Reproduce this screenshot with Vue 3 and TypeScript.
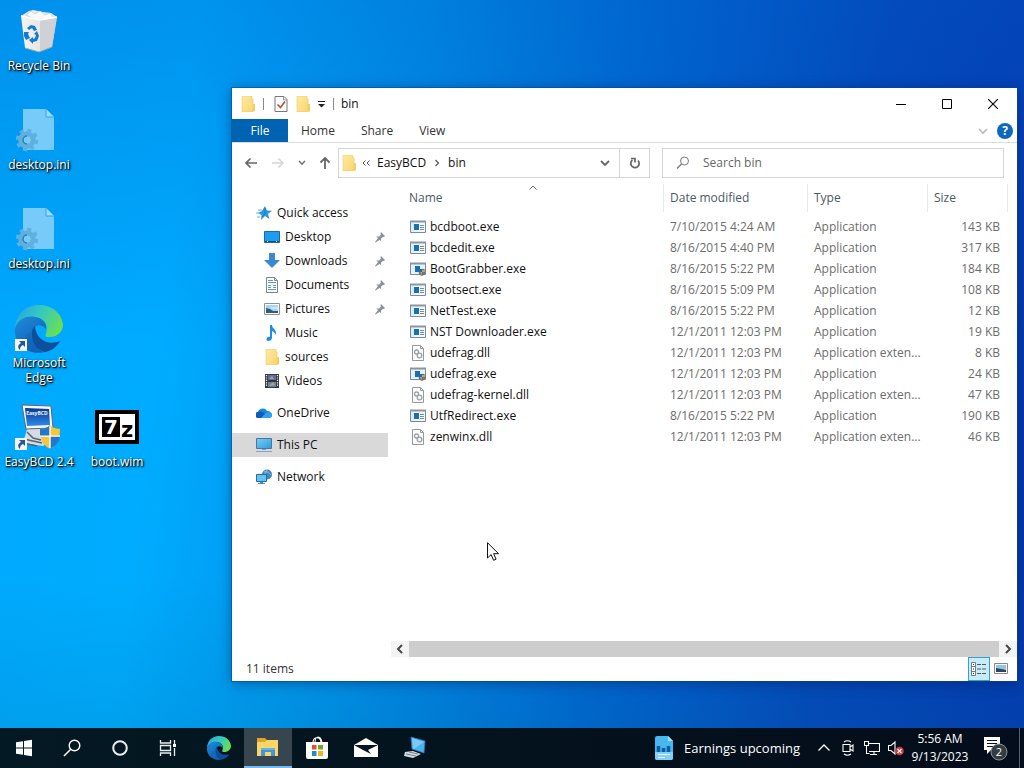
<script setup lang="ts">
import { ref } from 'vue'

interface DesktopItem { label: string; icon: string; col: number; row: number }
interface NavItem { label: string; icon: string; child?: boolean; pinned?: boolean; current?: boolean; gap?: boolean }
interface FileRow { name: string; icon: string; date: string; type: string; size: string }

const query = ref('')

const desktopItems: DesktopItem[] = [
  { label: 'Recycle Bin', icon: 'bin', col: 1, row: 1 },
  { label: 'desktop.ini', icon: 'ini', col: 1, row: 2 },
  { label: 'desktop.ini', icon: 'ini', col: 1, row: 3 },
  { label: 'Microsoft Edge', icon: 'edge-link', col: 1, row: 4 },
  { label: 'EasyBCD 2.4', icon: 'easybcd', col: 1, row: 5 },
  { label: 'boot.wim', icon: 'sevenzip', col: 2, row: 5 },
]

const navItems: NavItem[] = [
  { label: 'Quick access', icon: 'star' },
  { label: 'Desktop', icon: 'desktop', child: true, pinned: true },
  { label: 'Downloads', icon: 'download', child: true, pinned: true },
  { label: 'Documents', icon: 'document', child: true, pinned: true },
  { label: 'Pictures', icon: 'picture', child: true, pinned: true },
  { label: 'Music', icon: 'music', child: true },
  { label: 'sources', icon: 'folder', child: true },
  { label: 'Videos', icon: 'video', child: true },
  { label: 'OneDrive', icon: 'cloud', gap: true },
  { label: 'This PC', icon: 'pc', gap: true, current: true },
  { label: 'Network', icon: 'network', gap: true },
]

const files: FileRow[] = [
  { name: 'bcdboot.exe', icon: 'exe', date: '7/10/2015 4:24 AM', type: 'Application', size: '143 KB' },
  { name: 'bcdedit.exe', icon: 'exe', date: '8/16/2015 4:40 PM', type: 'Application', size: '317 KB' },
  { name: 'BootGrabber.exe', icon: 'exe-shield', date: '8/16/2015 5:22 PM', type: 'Application', size: '184 KB' },
  { name: 'bootsect.exe', icon: 'exe', date: '8/16/2015 5:09 PM', type: 'Application', size: '108 KB' },
  { name: 'NetTest.exe', icon: 'exe', date: '8/16/2015 5:22 PM', type: 'Application', size: '12 KB' },
  { name: 'NST Downloader.exe', icon: 'exe', date: '12/1/2011 12:03 PM', type: 'Application', size: '19 KB' },
  { name: 'udefrag.dll', icon: 'dll', date: '12/1/2011 12:03 PM', type: 'Application exten...', size: '8 KB' },
  { name: 'udefrag.exe', icon: 'exe-shield', date: '12/1/2011 12:03 PM', type: 'Application', size: '24 KB' },
  { name: 'udefrag-kernel.dll', icon: 'dll', date: '12/1/2011 12:03 PM', type: 'Application exten...', size: '47 KB' },
  { name: 'UtfRedirect.exe', icon: 'exe', date: '8/16/2015 5:22 PM', type: 'Application', size: '190 KB' },
  { name: 'zenwinx.dll', icon: 'dll', date: '12/1/2011 12:03 PM', type: 'Application exten...', size: '46 KB' },
]

const systemButtons = [
  { label: 'Start', icon: 'start' },
  { label: 'Search', icon: 'search-task' },
  { label: 'Cortana', icon: 'cortana' },
  { label: 'Task View', icon: 'taskview' },
]

const appButtons = [
  { label: 'Microsoft Edge', icon: 'edge', active: false },
  { label: 'File Explorer', icon: 'explorer', active: true },
  { label: 'Microsoft Store', icon: 'store', active: false },
  { label: 'Mail', icon: 'mail', active: false },
  { label: 'Remote Desktop', icon: 'remote', active: false },
]
</script>

<template>
  <div class="screen">
    <svg class="sprite" aria-hidden="true">
      <defs>
        <linearGradient id="g-bin" x1="0" x2="1"><stop offset="0" stop-color="#f4f4f4" /><stop offset=".65" stop-color="#e3e3e3" /><stop offset="1" stop-color="#b9bcc0" /></linearGradient>
        <linearGradient id="g-edge-top" x1="0" y1=".3" x2="1" y2=".7"><stop offset="0" stop-color="#2aa9e0" /><stop offset=".45" stop-color="#35c9c0" /><stop offset="1" stop-color="#6fe04a" /></linearGradient>
        <linearGradient id="g-edge-left" x1="0" y1="0" x2=".6" y2="1"><stop offset="0" stop-color="#1f8ddb" /><stop offset="1" stop-color="#0f5cb4" /></linearGradient>
        <linearGradient id="g-folder" x1="0" x2="1" y2="1"><stop offset="0" stop-color="#ffe9a2" /><stop offset="1" stop-color="#f9d66f" /></linearGradient>
        <linearGradient id="g-screen" x2="1" y2="1"><stop offset="0" stop-color="#7ccdf5" /><stop offset="1" stop-color="#2b9be0" /></linearGradient>
        <linearGradient id="g-crt" x2="0" y2="1"><stop offset="0" stop-color="#0b3690" /><stop offset="1" stop-color="#2f8ae8" /></linearGradient>
      </defs>

      <symbol id="bin" viewBox="0 0 48 48">
        <path d="M6 8 14 3l4-1 5 1 5 1 8 1 6 4-3 5H9z" fill="#e9eaeb" />
        <path d="M11 7l5-4 4 3 5-3 5 4 5-2 3 4-12 5z" fill="#fafafa" stroke="#c4c8cc" stroke-width=".7" />
        <path d="M6 8l19 4 17-3-5 30-13 5L10 40z" fill="url(#g-bin)" />
        <path d="M25 12l17-3-5 30-12 4z" fill="#cfd1d4" />
        <path d="M6 8l19 4 17-3" fill="none" stroke="#fff" stroke-width="1.4" />
        <path d="M10 40l14 4 13-5" fill="none" stroke="#9aa" stroke-width="1" />
        <path d="M12 20l4-3 4 1 2 4-3 1-2-3-3 2zM9 24l5 0-1 2 2 4-4 2-2-4zM22 23l2 5-2 5-4 1v2l-4-4 4-3v2l2-1 1-3-2-1z" fill="#1779cc" />
      </symbol>

      <symbol id="ini" viewBox="0 0 48 48">
        <path d="M8 2h23l8 8v33H8z" fill="#77cbf8" />
        <path d="M31 2v8h8" fill="#9bdcff" stroke="#3aa0d8" stroke-width="1" />
        <circle cx="12" cy="33" r="9.500" fill="none" stroke="#5fb0de" stroke-width="3.500" stroke-dasharray="3.900 3.560" />
        <circle cx="12" cy="33" r="6.200" fill="none" stroke="#5fb0de" stroke-width="5" />
        <path d="M12 29a4 4 0 0 0 0 8" fill="none" stroke="#2c7fb5" stroke-width="1.500" />
      </symbol>

      <symbol id="edge" viewBox="0 0 48 48">
        <path d="M24 0C10 0 1 10 0 23c4-8 12-12 20-11 9 1 14 8 11 16-1 2-1 4 2 4 8 1 15-5 15-12C47 8 37 0 24 0z" fill="url(#g-edge-top)" />
        <path d="M0 24C2 15 11 10 20 12c8 1 12 7 11 12-3-4-8-5-11-2-5 7 0 24 9 25-16 3-30-7-29-23z" fill="url(#g-edge-left)" />
        <path d="M20 21c-7 6-2 24 10 26 6-1 12-5 15-11-7 3-15 2-20-3-3-3-5-8-5-12z" fill="#0c4f9b" />
        <path d="M15 27c0 12 7 18 15 20-10 3-21-1-25-10" fill="#1466b8" opacity=".6" />
      </symbol>

      <symbol id="shortcut" viewBox="0 0 12 12">
        <path d="M0 0h12v12H0z" fill="#f4f6fb" />
        <path d="M4 2h6v6L8 6c-2 1-3 2-3 5-3-3-2-5 1-7z" fill="#27549c" />
      </symbol>

      <symbol id="edge-link" viewBox="0 0 48 48">
        <use href="#edge" width="48" height="48" />
        <use href="#shortcut" y="34" width="12" height="12" />
      </symbol>

      <symbol id="shield" viewBox="0 0 22 26">
        <path d="M11 0c3 3 7 4 11 4 0 10-2 18-11 22C2 22 0 14 0 4c4 0 8-1 11-4z" fill="#f6c739" />
        <path d="M11 0v12H0V4c4 0 8-1 11-4zM11 12h11c-1 6-4 11-11 14z" fill="#2477c9" />
        <path d="M11 1v24M0 12h22" stroke="#fff" stroke-width="1.500" />
      </symbol>

      <symbol id="easybcd" viewBox="0 0 48 48">
        <path d="M12 25h18l8 10-10 7-20-3z" fill="#d5dce5" />
        <path d="M12 28l6 6 8 2M9 35l18 4M8 39l14 3" stroke="#59636f" stroke-width="1.500" fill="none" />
        <path d="M7 1l29 1 2 22-27 1z" fill="#f4f7fa" stroke="#5c6675" />
        <path d="M10 4l24 1 1 16-23 1z" fill="url(#g-crt)" />
        <text x="22" y="11" text-anchor="middle" font-size="5" font-weight="700" font-family="Open Sans, sans-serif" fill="#f3f7ff">EasyBCD</text>
        <use href="#shield" x="25" y="21" width="20" height="24" />
        <use href="#shortcut" y="34" width="12" height="12" />
      </symbol>

      <symbol id="sevenzip" viewBox="0 0 48 48">
        <path d="M2 6h44v34H2z" fill="#000" />
        <path d="M6 10h36v26H6z" fill="#fff" />
        <path d="M9 13h18v20H9z" fill="#000" />
        <text x="18" y="30" text-anchor="middle" font-size="20" font-weight="700" font-family="DejaVu Sans, sans-serif" fill="#fff">7</text>
        <text x="34" y="33" text-anchor="middle" font-size="21" font-weight="700" font-family="DejaVu Sans, sans-serif" fill="#000">z</text>
      </symbol>

      <symbol id="folder" viewBox="0 0 16 16">
        <path d="M2 0h10v3h1v13H2z" fill="url(#g-folder)" stroke="#ecc968" stroke-width=".6" />
        <path d="M13 8h2v7l-2 1z" fill="#f3cd62" />
      </symbol>

      <symbol id="check" viewBox="0 0 16 16">
        <path d="M2 .5h9l3 3v12H2z" fill="#fff" stroke="#777" />
        <path d="M10.500.5v3.500H14" fill="none" stroke="#999" />
        <path d="M4.500 8.500l3 3 4.500-6" fill="none" stroke="#b5533c" stroke-width="1.700" />
      </symbol>

      <symbol id="star" viewBox="0 0 16 16">
        <path d="M9 1l2 4.500 5 .2-4 3.300 1.500 5L9 11l-4 4 .5-5L2 8l4-2z" fill="#2f96e0" />
        <path d="M2 5h4M0 8h4M1 12h3" stroke="#5cb5ee" stroke-width="1" />
        <path d="M9 3v6l-3 3" stroke="#1673bd" fill="none" stroke-width=".8" />
      </symbol>
      <symbol id="desktop" viewBox="0 0 16 16">
        <path d="M.5 2.500h15v11H.5z" fill="#1e9df0" stroke="#176b9f" />
        <path d="M1 12.500h14" stroke="#0c5278" />
        <path d="M3 12.500h1m8 0h1" stroke="#fff" />
      </symbol>
      <symbol id="download" viewBox="0 0 16 16"><path d="M5 0h6v7h5l-8 8-8-8h5z" fill="#3b87d2" /></symbol>
      <symbol id="document" viewBox="0 0 16 16">
        <path d="M2.500.5h8l3 3v12h-11z" fill="#fff" stroke="#7c8790" />
        <path d="M10.500.5v3h3" fill="none" stroke="#7c8790" />
        <path d="M4 3.500h5M4 5.500h8M4 8.500h3m2 0h3M4 10.500h3m2 0h3M4 12.500h8" stroke="#58a0c0" />
      </symbol>
      <symbol id="picture" viewBox="0 0 16 16">
        <path d="M.5 2.500h15v11H.5z" fill="#fff" stroke="#8b9299" />
        <path d="M2 4h12v8H2z" fill="#a9d6f3" />
        <path d="M2 7l4 1 3 2h5v2H2z" fill="#2d5d80" />
        <path d="M7 7h7" stroke="#eff8fd" />
      </symbol>
      <symbol id="music" viewBox="0 0 16 16">
        <path d="M6 0h2c0 4 5 4 4 10-1-2-2-3-4-4v7c0 2-2 3-4 3s-2-3 0-4c1-.5 2 0 2 0z" fill="#1f8de0" />
      </symbol>
      <symbol id="video" viewBox="0 0 16 16">
        <path d="M1 1h14v14H1z" fill="#35383d" />
        <path d="M2.500 2v12M13.500 2v12" stroke="#fff" stroke-width="1.200" stroke-dasharray="1.200 1.200" />
        <path d="M4 2h8v5H4z" fill="#5a6cb4" /><path d="M4 9h8v5H4z" fill="#5c83bb" />
        <path d="M5 6l3-3 2 3zM5 13l4-4 2 3z" fill="#c4a34b" />
      </symbol>
      <symbol id="cloud" viewBox="0 0 16 16">
        <path d="M3 13a3 3 0 0 1-1-6c1-4 7-5 9-1 3 0 5 2 5 4s-1 3-3 3z" fill="#1586dc" />
        <path d="M3 13a3 3 0 0 1-1-6c2-1 5 0 7 2l5 4z" fill="#0a60b6" />
        <path d="M9 9c2-2 4-2 6-1 2 3 0 5-2 5H5z" fill="#30a3ef" />
      </symbol>
      <symbol id="pc" viewBox="0 0 16 16">
        <path d="M.5 1.500h15v10H.5z" fill="url(#g-screen)" stroke="#47799b" />
        <path d="M6 12h4v1H6zM0 14h16v1H0z" fill="#7aa4bf" />
      </symbol>
      <symbol id="network" viewBox="0 0 16 16">
        <circle cx="11" cy="5.500" r="5" fill="#4186b8" />
        <path d="M8 3c3-1 5 1 7 3M11 1c-1 2-2 3-2 5" stroke="#a5cfe8" fill="none" stroke-width=".8" />
        <path d="M.5 5.500h10v7H.5z" fill="#66c2f0" stroke="#1e6fa8" />
        <path d="M4 13h3v1H4zM2 14h7v1H2z" fill="#4d8db3" />
      </symbol>
      <symbol id="pin" viewBox="0 0 12 12">
        <path d="M7 1l4 4-1 1-1-.3-2 2V10L5.500 9 1.500 11.500 1 11l3-4L2 5.500h3l2-2L6.500 2z" fill="#8b949c" />
      </symbol>

      <symbol id="exe" viewBox="0 0 16 14">
        <path d="M.5 1.500h15v11H.5z" fill="#f3f8fb" stroke="#7d8a93" />
        <path d="M0 1.500h16" stroke="#8b959d" stroke-width="2" />
        <path d="M1 3h3v9H1z" fill="#d6effa" />
        <path d="M4 4h5v6H4z" fill="#1a6fb3" />
        <path d="M10 5.500h4m-4 2h4m-4 2h4" stroke="#6c8fab" />
      </symbol>
      <symbol id="exe-shield" viewBox="0 0 16 14">
        <path d="M.5 1.500h15v11H.5z" fill="#e3f3fb" stroke="#7d8a93" />
        <path d="M0 1.500h16" stroke="#8b959d" stroke-width="2" />
        <path d="M5 4h5v3h4v3H5z" fill="#1a6fb3" />
        <path d="M9 7c2 1 5 1 7 0 0 4-1 6-4 7-3-1-4-3-3-7z" fill="#6a7680" />
        <path d="M9 7h3v3H9z" fill="#1f6db0" /><path d="M12 8h3v2h-3zM10 10h2v3z" fill="#d0a640" />
      </symbol>
      <symbol id="dll" viewBox="0 0 16 16">
        <path d="M2.500.5h8l3 3v12h-11z" fill="#fcfcfc" stroke="#959a9e" />
        <path d="M10.500.5v3h3" fill="none" stroke="#959a9e" />
        <circle cx="6.500" cy="7" r="2" fill="none" stroke="#9aa1a6" stroke-width="1.300" />
        <circle cx="9.500" cy="10.500" r="2.300" fill="none" stroke="#9aa1a6" stroke-width="1.300" />
      </symbol>

      <symbol id="start" viewBox="0 0 24 24"><path d="M4 6.200l7-1v6.300H4zM12 5l8-1.200v7.700h-8zM4 12.500h7v6.300l-7-1zM12 12.500h8v7.700L12 19z" fill="#fff" /></symbol>
      <symbol id="search-task" viewBox="0 0 24 24"><circle cx="14.500" cy="9.500" r="5.300" fill="none" stroke="#fff" stroke-width="1.400" /><path d="M10.700 13.300L4 20" stroke="#fff" stroke-width="1.500" /></symbol>
      <symbol id="cortana" viewBox="0 0 24 24"><circle cx="12" cy="12" r="6.800" fill="none" stroke="#e9edf0" stroke-width="2" /></symbol>
      <symbol id="taskview" viewBox="0 0 24 24">
        <path d="M4.500 4v3h10V4M4.500 20v-3h10v3M4.500 9.500h10v5h-10zM18.500 4v5m0 3v8" fill="none" stroke="#e9edf0" stroke-width="1.300" />
        <path d="M17 8h3v3h-3z" fill="#fff" />
      </symbol>
      <symbol id="explorer" viewBox="0 0 24 24">
        <path d="M1 3h8l2 2h11v16H1z" fill="#e1a32a" /><path d="M1 7h8l2-2h11v16H1z" fill="#fcd567" />
        <path d="M5 21v-8h14v8h-4v-4H9v4z" fill="#4295d5" /><path d="M5 13h14v2H5z" fill="#5fb4ec" />
      </symbol>
      <symbol id="store" viewBox="0 0 24 24">
        <path d="M8 7c0-7 8-7 8 0M10 7c0-8 6-8 7 0" fill="none" stroke="#fff" stroke-width="1.100" />
        <path d="M1 6h22v15q0 2-2 2H3q-2 0-2-2z" fill="#fff" />
        <path d="M7 9h4.500v4.500H7z" fill="#e44f2d" /><path d="M13 9h5v4.500h-5z" fill="#70a82b" /><path d="M7 15h4.500v5H7z" fill="#1f8dd0" /><path d="M13 15h5v5h-5z" fill="#eeb71c" />
      </symbol>
      <symbol id="mail" viewBox="0 0 24 24">
        <path d="M0 9l12-7 12 7v12H0z" fill="#fff" /><path d="M0 9l24 0-10 5 3 4-8-4z" fill="#041622" />
      </symbol>
      <symbol id="remote" viewBox="0 0 24 24">
        <path d="M8 1l14 4-1 12-12-4z" fill="#4bb2ef" stroke="#267eb9" stroke-width=".7" /><path d="M9 2l12 4-10 7-1-1z" fill="#7bcaf5" />
        <path d="M2 16l8-1 8 3-8 4-9-2z" fill="#d3dbe1" /><path d="M3 18l10 2M6 16l9 2" stroke="#77848e" />
      </symbol>

      <symbol id="news" viewBox="0 0 18 24">
        <path d="M2 0h11l5 5v17q0 2-2 2H2q-2 0-2-2V2q0-2 2-2z" fill="#49b6ef" /><path d="M13 0v5h5" fill="#a7e0fb" />
        <path d="M0 16h18v6q0 2-2 2H2q-2 0-2-2z" fill="#80d0f7" />
        <path d="M3.500 16v-6m5 6v-4m5 4v-6" stroke="#0f5d9e" stroke-width="3.500" /><path d="M3 18.500h12M3 21.500h7" stroke="#e7f8ff" />
      </symbol>
      <symbol id="chev-up" viewBox="0 0 16 16"><path d="M2.500 10.500L8 5l5.500 5.500" fill="none" stroke="#fff" stroke-width="1.300" /></symbol>
      <symbol id="meet" viewBox="0 0 16 16"><path d="M3 4.500h7v7H3zM10 7l3-2v6l-3-2M4 2q3.500-2.500 7 0M4 14q3.500 2.500 7 0" fill="none" stroke="#fff" stroke-width="1.100" /></symbol>
      <symbol id="ethernet" viewBox="0 0 16 16"><path d="M5 3.500h10.500v8H5M.5 1.500h4v4h-4zM2.500 5.500v8h3M10 12v2.500M6 14.500h7" fill="none" stroke="#fff" stroke-width="1.100" /></symbol>
      <symbol id="muted" viewBox="0 0 16 16">
        <path d="M.5 5.500H3L7 2v12L3 10.500H.5z" fill="none" stroke="#fff" stroke-width="1.100" /><circle cx="11.500" cy="11" r="4.300" fill="#d4363c" /><path d="M9.500 9l4 4m0-4l-4 4" stroke="#fff" stroke-width="1.200" />
      </symbol>
      <symbol id="notice" viewBox="0 0 26 26">
        <path d="M1 2h16v13H8l-4 4v-4H1z" fill="#fff" /><path d="M4 5.500h10M4 8.500h10M4 11.500h7" stroke="#07131c" stroke-width="1.100" />
        <circle cx="16" cy="17" r="8" fill="#333b43" stroke="#8a9299" />
        <text x="16" y="21" text-anchor="middle" font-size="11" font-family="Open Sans, sans-serif" fill="#fff">2</text>
      </symbol>
    </svg>

    <main class="desktop">
      <div class="desktop-icons">
        <button v-for="item in desktopItems" :key="item.label + item.row" class="desktop-item" :class="[`col-${item.col}`, `row-${item.row}`]">
          <svg class="i48"><use :href="`#${item.icon}`" /></svg>
          <span>{{ item.label }}</span>
        </button>
      </div>

      <section class="window" aria-label="bin">
        <header class="titlebar">
          <svg class="i16"><use href="#folder" /></svg>
          <span class="divider first"></span>
          <button class="plain" aria-label="Properties"><svg class="i16"><use href="#check" /></svg></button>
          <button class="plain quick" aria-label="New folder"><svg class="i16"><use href="#folder" /></svg></button>
          <button class="plain customize" aria-label="Customize Quick Access Toolbar"><svg width="8" height="8" viewBox="0 0 8 8"><path d="M1 1.500h7" stroke="#222" /><path d="M1 4h7L4.500 7.500z" fill="#222" /></svg></button>
          <span class="divider"></span>
          <h1>bin</h1>
          <div class="controls">
            <button aria-label="Minimize"><svg width="10" height="10" viewBox="0 0 10 10"><path d="M0 5.500h10" stroke="#000" /></svg></button>
            <button aria-label="Maximize"><svg width="10" height="10" viewBox="0 0 10 10"><path d="M.5.500h9v9h-9z" fill="none" stroke="#000" /></svg></button>
            <button aria-label="Close"><svg width="10" height="10" viewBox="0 0 10 10"><path d="M0 0l10 10M10 0L0 10" stroke="#000" stroke-width="1.100" /></svg></button>
          </div>
        </header>

        <nav class="ribbon" aria-label="Ribbon">
          <button class="tab file">File</button>
          <button class="tab">Home</button>
          <button class="tab">Share</button>
          <button class="tab">View</button>
          <div class="ribbon-end">
            <button class="plain" aria-label="Expand the Ribbon"><svg width="10" height="8" viewBox="0 0 10 8"><path d="M1 2l4 4 4-4" fill="none" stroke="#b8b8b8" stroke-width="1.600" /></svg></button>
            <button class="help" aria-label="Help">?</button>
          </div>
        </nav>

        <div class="address-row">
          <div class="arrows">
            <button class="plain" aria-label="Back"><svg width="14" height="12" viewBox="0 0 14 12"><path d="M13 6H2M6.500 1.500L2 6l4.500 4.500" fill="none" stroke="#666" stroke-width="1.700" /></svg></button>
            <button class="plain" aria-label="Forward"><svg width="14" height="12" viewBox="0 0 14 12"><path d="M1 6h11M7.500 1.500L12 6l-4.500 4.500" fill="none" stroke="#d5d5d5" stroke-width="1.500" /></svg></button>
            <button class="plain" aria-label="Recent locations"><svg width="8" height="8" viewBox="0 0 8 8"><path d="M1 2l3 3 3-3" fill="none" stroke="#777" stroke-width="1.600" /></svg></button>
            <button class="plain" aria-label="Up"><svg width="12" height="14" viewBox="0 0 12 14"><path d="M6 13V2M1.500 6.500L6 2l4.500 4.500" fill="none" stroke="#666" stroke-width="1.800" /></svg></button>
          </div>
          <div class="address">
            <svg class="i16"><use href="#folder" /></svg>
            <svg class="back-mark" width="8" height="6" viewBox="0 0 8 6"><path d="M3.500.5L1 3l2.500 2.500M7.500.5L5 3l2.500 2.500" fill="none" stroke="#555" /></svg>
            <button class="plain">EasyBCD</button>
            <svg class="sep" width="6" height="8" viewBox="0 0 6 8"><path d="M1.500 1l3 3-3 3" fill="none" stroke="#555" stroke-width="1.200" /></svg>
            <button class="plain">bin</button>
            <button class="plain history" aria-label="Previous locations"><svg width="10" height="8" viewBox="0 0 10 8"><path d="M1 2l4 4 4-4" fill="none" stroke="#666" stroke-width="1.800" /></svg></button>
            <button class="refresh" aria-label="Refresh"><svg width="12" height="14" viewBox="0 0 12 14"><path d="M3.500 4A4.200 4.200 0 1 0 9 4.500M2 2.500h4v4" fill="none" stroke="#666" stroke-width="1.700" /></svg></button>
          </div>
          <label class="search">
            <svg width="14" height="14" viewBox="0 0 14 14"><circle cx="8.500" cy="5" r="4" fill="none" stroke="#777" /><path d="M5.500 8L1 12.500" stroke="#777" stroke-width="1.200" /></svg>
            <input v-model="query" type="text" placeholder="Search bin" aria-label="Search bin" />
          </label>
        </div>

        <div class="body">
          <nav class="sidebar" aria-label="Folders">
            <a v-for="item in navItems" :key="item.label" href="#" :class="{ child: item.child, current: item.current, gap: item.gap }">
              <svg class="i16"><use :href="`#${item.icon}`" /></svg>
              <span>{{ item.label }}</span>
              <svg v-if="item.pinned" class="pin"><use href="#pin" /></svg>
            </a>
          </nav>
          <div class="pane">
            <table>
              <colgroup><col /><col class="c-date" /><col class="c-type" /><col class="c-size" /></colgroup>
              <thead>
                <tr>
                  <th class="name">Name<svg class="sort" width="8" height="5" viewBox="0 0 8 5"><path d="M.5 4.500L4 1l3.500 3.500" fill="none" stroke="#666" /></svg></th>
                  <th>Date modified</th><th>Type</th><th>Size</th>
                </tr>
              </thead>
              <tbody>
                <tr v-for="file in files" :key="file.name">
                  <td class="name"><span class="file-name"><svg class="i16"><use :href="`#${file.icon}`" /></svg>{{ file.name }}</span></td>
                  <td>{{ file.date }}</td><td>{{ file.type }}</td><td class="size">{{ file.size }}</td>
                </tr>
              </tbody>
            </table>
            <div class="scrollbar">
              <button aria-label="Scroll left"><svg width="8" height="10" viewBox="0 0 8 10"><path d="M6 1L2 5l4 4" fill="none" stroke="#444" stroke-width="1.900" /></svg></button>
              <div class="thumb"></div>
              <button aria-label="Scroll right"><svg width="8" height="10" viewBox="0 0 8 10"><path d="M2 1l4 4-4 4" fill="none" stroke="#444" stroke-width="1.900" /></svg></button>
            </div>
          </div>
        </div>

        <footer class="status">
          <span>11 items</span>
          <div class="views">
            <button class="on" aria-label="Details view"><svg width="18" height="16" viewBox="0 0 18 16"><path d="M1.500 1.500h4v13h-4zM1.500 5.500h4m-4 5h4" fill="#fff" stroke="#6e7d85" /><path d="M7 3.500h4m1 0h4M7 8h4m1 0h4M7 12.500h4m1 0h4" stroke="#4b5b64" /><path d="M3 3.500h1M3 8h1m-1 4.500h1" stroke="#333" /></svg></button>
            <button aria-label="Large icons view"><svg width="14" height="12" viewBox="0 0 14 12"><path d="M.5.500h13v10H.5z" fill="#fff" stroke="#888" /><path d="M2 2h10v7H2z" fill="#8fc5e8" /><path d="M2 5l5 1 5 1v2H2z" fill="#25475d" /></svg></button>
          </div>
        </footer>
      </section>

      <svg class="cursor" width="12" height="19" viewBox="0 0 12 19" aria-hidden="true"><path d="M.5.700v15.300l3.600-3.400 2.500 5.700 2.500-1.100-2.500-5.500h5z" fill="#fff" stroke="#111" /></svg>
    </main>

    <footer class="taskbar">
      <button v-for="item in systemButtons" :key="item.label" class="task" :aria-label="item.label"><svg class="i24"><use :href="`#${item.icon}`" /></svg></button>
      <div class="apps">
        <button v-for="item in appButtons" :key="item.label" class="task" :class="{ active: item.active }" :aria-label="item.label"><svg class="i24"><use :href="`#${item.icon}`" /></svg></button>
      </div>
      <button class="news"><svg width="18" height="24"><use href="#news" /></svg>Earnings upcoming</button>
      <div class="tray">
        <button aria-label="Show hidden icons"><svg class="i16"><use href="#chev-up" /></svg></button>
        <button aria-label="Meet Now"><svg class="i16"><use href="#meet" /></svg></button>
        <button aria-label="Network"><svg class="i16"><use href="#ethernet" /></svg></button>
        <button aria-label="Volume muted"><svg class="i16"><use href="#muted" /></svg></button>
      </div>
      <button class="clock"><time>5:56 AM</time><time>9/13/2023</time></button>
      <button class="notice" aria-label="2 new notifications"><svg width="26" height="26"><use href="#notice" /></svg></button>
      <button class="show-desktop" aria-label="Show desktop"></button>
    </footer>
  </div>
</template>

<style scoped>
* { box-sizing: border-box; }
.screen {
  min-height: 100vh;
  display: flex;
  flex-direction: column;
  overflow: hidden;
  font: 12px/16px "Open Sans", "Noto Sans", sans-serif;
  color: #111;
  background:
    linear-gradient(to bottom, rgba(0, 90, 200, .3) 0%, rgba(0, 110, 220, 0) 45%, rgba(0, 110, 190, 0) 75%, rgba(0, 110, 160, .22) 100%),
    linear-gradient(97deg, #00a8fc 0%, #00acff 18%, #0090e8 38%, #0065cf 60%, #0445b8 80%, #0436ae 100%);
}
button { font: inherit; color: inherit; background: none; border: 0; padding: 0; margin: 0; display: flex; align-items: center; justify-content: center; }
svg { flex: none; display: block; text-shadow: none; }
.sprite { position: absolute; width: 0; height: 0; }
.i16 { width: 16px; height: 16px; }
.i24 { width: 24px; height: 24px; }
.i48 { width: 48px; height: 48px; }

.desktop { position: relative; flex: 1; display: flex; }
.desktop-icons { display: grid; grid-template-columns: repeat(2, 78px); grid-auto-rows: 99px; align-content: start; }
.desktop-item { flex-direction: column; justify-content: flex-start; padding-top: 8px; gap: 2px; color: #fff; line-height: 15px; text-shadow: 1px 1px 1px #000, 1px 1px 3px #000; }
.desktop-item span { max-width: 76px; }
.col-1 { grid-column: 1; }
.col-2 { grid-column: 2; }
.row-1 { grid-row: 1; }
.row-2 { grid-row: 2; }
.row-3 { grid-row: 3; }
.row-4 { grid-row: 4; }
.row-5 { grid-row: 5; }

.window { position: absolute; inset: 88px 7px 47px 232px; display: flex; flex-direction: column; background: #fff; box-shadow: 0 0 0 1px rgba(10, 75, 130, .55), 0 2px 12px rgba(0, 20, 80, .45); }
.titlebar { display: flex; align-items: center; height: 31px; padding-left: 8px; }
.divider { width: 1px; height: 12px; background: #888; margin-right: 7px; }
.divider.first { margin: 0 9px 0 7px; }
.quick { margin-left: 6px; }
.customize { margin: 0 8px 0 6px; }
h1 { margin: 0; font-size: 12px; font-weight: 400; }
.controls { display: flex; align-self: stretch; margin-left: auto; padding-right: 1px; }
.controls button { width: 46px; }

.ribbon { display: flex; height: 24px; border-bottom: 1px solid #dcdcdc; color: #333; }
.tab { padding: 0 13px; }
.tab.file { width: 56px; background: #0063b1; color: #fff; }
.ribbon-end { display: flex; align-items: center; gap: 9px; margin-left: auto; padding-right: 4px; }
.help { width: 16px; height: 16px; border-radius: 50%; background: #0b68bd; color: #fff; font-weight: 700; }

.address-row { display: grid; grid-template-columns: 94px 312fr 354fr; align-items: center; height: 41px; padding: 0 13px 2px 12px; }
.arrows { display: flex; align-items: center; justify-content: space-between; padding-right: 7px; }
.address { display: flex; align-items: center; min-width: 0; height: 30px; border: 1px solid #d5d5d5; padding-left: 2px; }
.back-mark { margin: 0 7px 0 5px; }
.sep { margin: 0 8px; }
.history { margin-left: auto; margin-right: 9px; }
.refresh { width: 30px; height: 28px; border-left: 1px solid #d5d5d5; }
.search { display: flex; align-items: center; min-width: 0; height: 30px; margin-left: 12px; border: 1px solid #d5d5d5; padding-left: 13px; gap: 13px; }
.search input { flex: 1; min-width: 0; border: 0; padding: 0; outline: 0; font: inherit; color: #333; background: none; }
.search input::placeholder { color: #666; opacity: 1; }

.body { display: flex; flex: 1; min-height: 0; }
.sidebar { width: 158px; padding: 17px 2px 0 0; }
.sidebar a { display: flex; align-items: center; gap: 5px; height: 24px; padding-left: 24px; color: #111; text-decoration: none; }
.sidebar a.child { padding-left: 32px; }
.sidebar a.gap { margin-top: 8px; }
.sidebar a.current { background: #d9d9d9; }
.pin { width: 12px; height: 12px; margin-left: auto; margin-right: 2px; }
.pane { flex: 1; min-width: 0; display: flex; flex-direction: column; justify-content: space-between; }
table { width: calc(100% - 9px); border-collapse: separate; border-spacing: 0; table-layout: fixed; }
.c-date { width: 144px; }
.c-type { width: 120px; }
.c-size { width: 80px; }
th { position: relative; height: 28px; padding: 0 6px; text-align: left; font-weight: 400; color: #4c5867; border-right: 1px solid #e8e8e8; }
thead::after { content: ""; display: block; height: 4px; }
.sort { position: absolute; top: 1px; left: 51%; }
td { height: 21px; padding: 0 6px; color: #6d6d6d; white-space: nowrap; line-height: 20px; }
th.name { padding-left: 19px; }
td.name { padding-left: 20px; color: #111; }
td.size { text-align: right; padding-right: 8px; }
.file-name { display: flex; align-items: center; gap: 4px; }
.scrollbar { display: flex; height: 16px; margin-left: 1px; background: #f3f3f3; }
.scrollbar button { width: 18px; }
.thumb { flex: 1; background: #cdcdcd; }
.status { display: flex; align-items: center; justify-content: space-between; height: 24px; padding-left: 14px; color: #333; }
.views { display: flex; margin-right: 5px; }
.views button { width: 22px; height: 24px; }
.views .on { border: 1px solid #2fa3c9; background: #c9edf8; }
.cursor { position: absolute; left: 487px; top: 542px; }

.taskbar { display: flex; height: 40px; background: linear-gradient(90deg, #031923, #04111c 60%, #040d1b); color: #fff; }
.task { width: 48px; }
.apps { display: flex; gap: 1px; margin-left: 3px; }
.task.active { background: #36454e; border-bottom: 2px solid #76b9ed; }
.news { gap: 11px; margin-left: auto; margin-right: 12px; font-size: 13px; }
.tray { display: flex; }
.tray button { width: 24px; }
.clock { flex-direction: column; width: 64px; line-height: 18px; }
.notice { width: 47px; }
.show-desktop { width: 5px; border-left: 1px solid #56606a; }
</style>

<style>
body { margin: 0; }
</style>
